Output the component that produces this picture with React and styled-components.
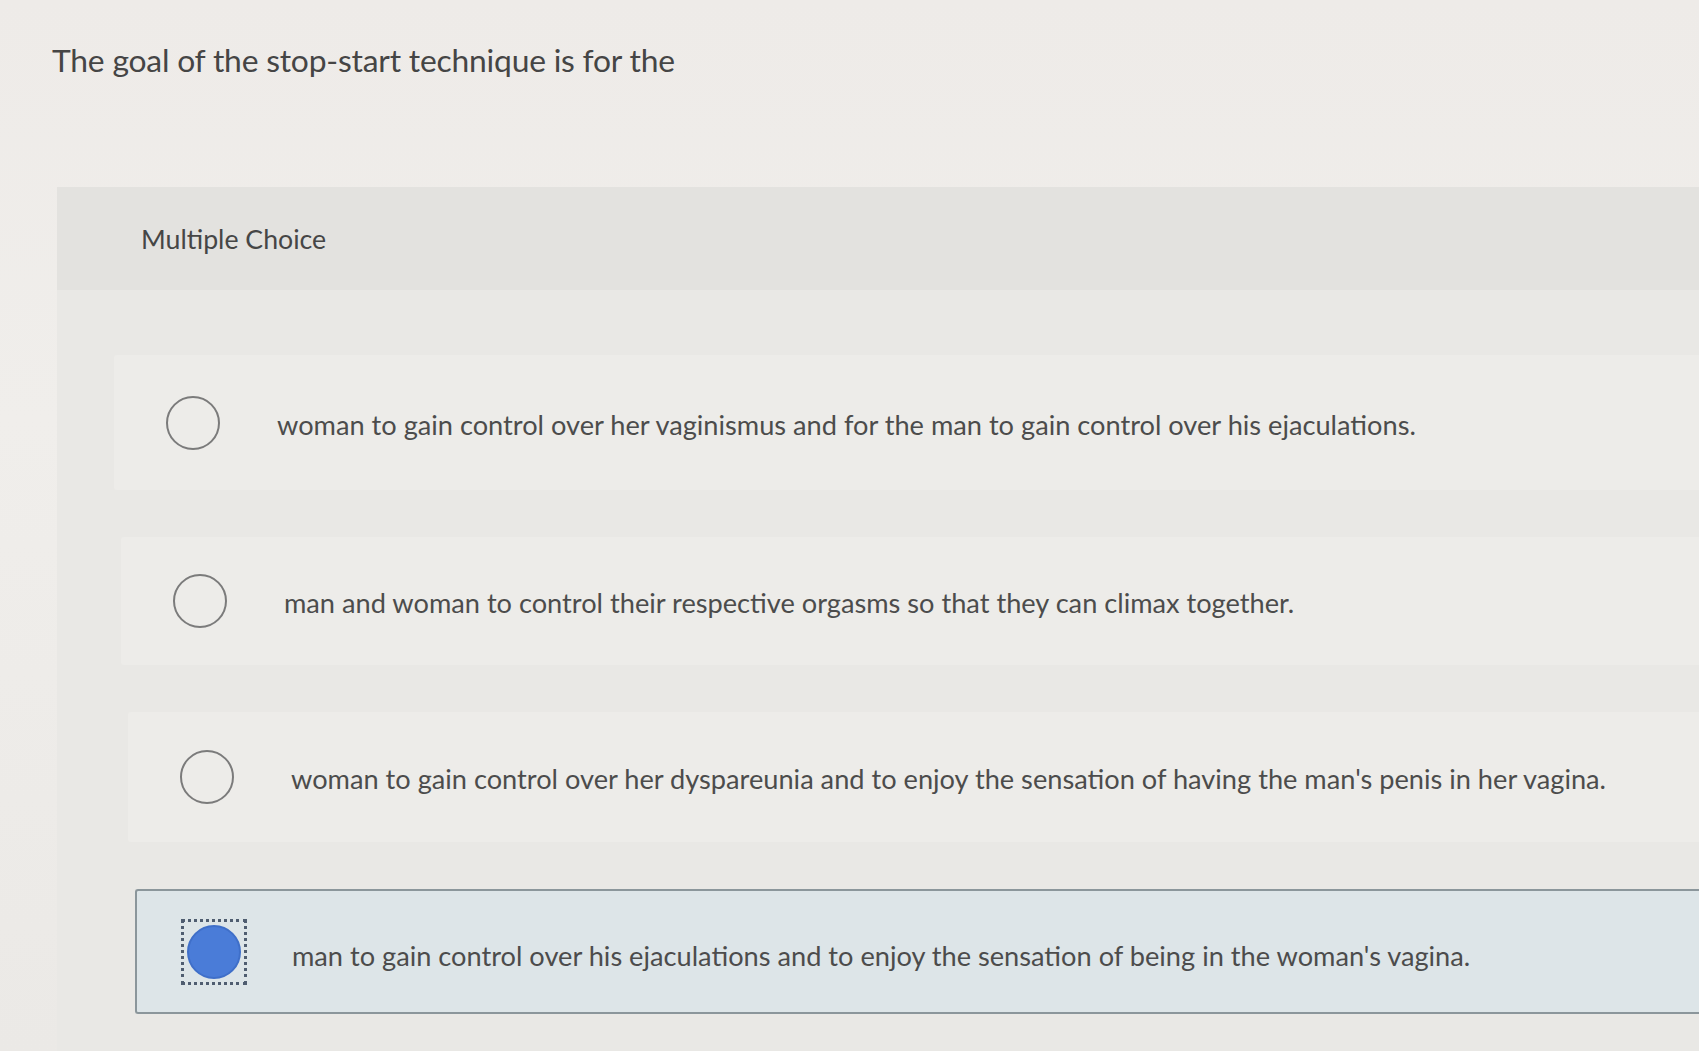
import React from "react";
import styled, { createGlobalStyle } from "styled-components";

const Global = createGlobalStyle`
  html, body { margin: 0; padding: 0; }
  body {
    background: #efece9;
    font-family: Lato, "Open Sans", "Liberation Sans", sans-serif;
    color: #4f4f4f;
    overflow: hidden;
  }
`;

const Page = styled.div`
  width: 1699px;
  height: 1051px;
  display: flex;
  flex-direction: column;
  background: linear-gradient(180deg, #eeebe8 0%, #f0eeeb 40%, #ebe9e6 100%);
  overflow: hidden;
`;

const Title = styled.h1`
  margin: 41px 0 0 52px;
  font-size: 31.8px;
  line-height: 38px;
  font-weight: 400;
  color: #454545;
  letter-spacing: -0.2px;
`;

const Panel = styled.section`
  margin: 108px 0 0 57px;
  flex: 1;
  display: flex;
  flex-direction: column;
  background: #e9e8e5;
`;

const PanelHeader = styled.div`
  height: 103px;
  display: flex;
  align-items: center;
  padding-left: 84px;
  background: #e3e2df;
  font-size: 26.7px;
  color: #464646;
`;

const OptionList = styled.div`
  display: flex;
  flex-direction: column;
  gap: 47px;
  padding: 65px 0 0 57px;
`;

const OptionRow = styled.label`
  display: flex;
  align-items: center;
  min-height: ${(p) => p.$h}px;
  margin-left: ${(p) => p.$shift}px;
  padding-left: ${(p) => (p.$selected ? 44 : 52)}px;
  background: ${(p) => (p.$selected ? "#dde5e8" : "#edece9")};
  border: ${(p) => (p.$selected ? "2px solid #8b969b" : "none")};
  border-right: none;
  border-radius: 3px 0 0 3px;
  box-sizing: border-box;
  cursor: pointer;
`;

const RadioWrap = styled.span`
  width: 66px;
  height: 66px;
  margin: 0 ${(p) => (p.$selected ? 45 : 51)}px 0 ${(p) => (p.$selected ? 0 : -6)}px;
  flex: none;
  display: flex;
  align-items: center;
  justify-content: center;
  box-sizing: border-box;
  border: 3px dotted ${(p) => (p.$selected ? "#4f5d70" : "transparent")};
`;

const Radio = styled.span`
  width: 54px;
  height: 54px;
  border-radius: 50%;
  box-sizing: border-box;
  border: 2px solid ${(p) => (p.$selected ? "#3f6fc9" : "#7b7b7b")};
  background: ${(p) => (p.$selected ? "#4a7cd8" : "transparent")};
`;

const OptionText = styled.span`
  font-size: 27.2px;
  color: #4c4c4c;
  white-space: nowrap;
  padding-top: ${(p) => (p.$selected ? 8 : 3)}px;
`;

const options = [
  {
    text: "woman to gain control over her vaginismus and for the man to gain control over his ejaculations.",
    h: 135,
  },
  {
    text: "man and woman to control their respective orgasms so that they can climax together.",
    h: 128,
  },
  {
    text: "woman to gain control over her dyspareunia and to enjoy the sensation of having the man's penis in her vagina.",
    h: 130,
  },
  {
    text: "man to gain control over his ejaculations and to enjoy the sensation of being in the woman's vagina.",
    h: 125,
    selected: true,
  },
];

export default function App() {
  return (
    <>
      <Global />
      <Page>
        <Title>The goal of the stop-start technique is for the</Title>
        <Panel>
          <PanelHeader>Multiple Choice</PanelHeader>
          <OptionList>
            {options.map((o, i) => (
              <OptionRow key={i} $h={o.h} $shift={i * 7} $selected={o.selected}>
                <RadioWrap $selected={o.selected}>
                  <Radio $selected={o.selected} />
                </RadioWrap>
                <OptionText $selected={o.selected}>{o.text}</OptionText>
              </OptionRow>
            ))}
          </OptionList>
        </Panel>
      </Page>
    </>
  );
}
